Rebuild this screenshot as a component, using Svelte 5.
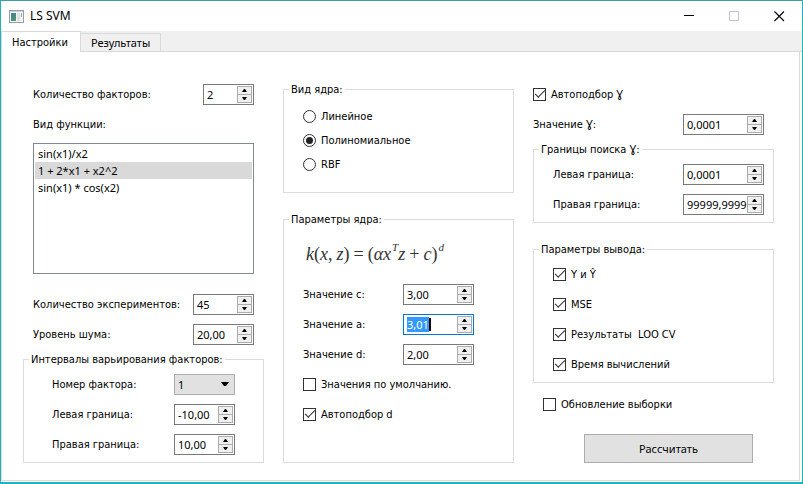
<script>
  import { onMount } from 'svelte';

  let functions = ['sin(x1)/x2', '1 + 2*x1 + x2^2', 'sin(x1) * cos(x2)'];
  let selectedFunction = $state('1 + 2*x1 + x2^2');
  let kernel = $state('poly');
  let kernels = [
    ['linear', 'Линейное'],
    ['poly', 'Полиномиальное'],
    ['rbf', 'RBF']
  ];
  let outputs = ['Y и Ŷ', 'MSE', 'Результаты\u00a0 LOO CV', 'Время вычислений'];

  onMount(() => {
    const input = document.getElementById('value-a');
    input.focus();
    input.select();
  });
</script>

{#snippet spin(id, label, value, size, active)}
  <div class="row">
    <label for={id}>{label}</label>
    <div class="spin {size}" class:active>
      <input {id} type="text" {value} />
      {#if active}<span class="caret"></span>{/if}
      <div class="steps">
        <button type="button" aria-label="Увеличить"><svg width="5" height="3" viewBox="0 0 5 3"><path d="M0 3 2 0H3L5 3Z" /></svg></button>
        <button type="button" aria-label="Уменьшить"><svg width="5" height="3" viewBox="0 0 5 3"><path d="M0 0 2 3H3L5 0Z" /></svg></button>
      </div>
    </div>
  </div>
{/snippet}

{#snippet check(label, checked)}
  <label class="choice"><input type="checkbox" {checked} /><span>{label}</span></label>
{/snippet}

<div class="window">
  <header>
    <svg class="app-icon" width="15" height="13" viewBox="0 0 15 13">
      <defs>
        <linearGradient id="pic" x1="0" y1="0" x2="0.6" y2="1">
          <stop offset="0" stop-color="#4b7ba0" />
          <stop offset="1" stop-color="#4c9a72" />
        </linearGradient>
      </defs>
      <rect x="0.5" y="0.5" width="14" height="12" fill="#f4f4f4" stroke="#9b9fa3" />
      <rect x="1" y="1" width="13" height="1" fill="#c9cfd4" />
      <rect x="2" y="3" width="5" height="8" fill="url(#pic)" />
      <rect x="8" y="3" width="3" height="8" fill="#dfe3e4" />
      <rect x="12" y="3" width="1" height="4" fill="#86b7a8" />
    </svg>
    <h1>LS SVM</h1>
    <div class="controls">
      <button type="button" aria-label="Свернуть"><svg width="11" height="11" viewBox="0 0 11 11"><path d="M0 4.5H10" stroke="#000" /></svg></button>
      <button type="button" aria-label="Развернуть" disabled><svg width="11" height="11" viewBox="0 0 11 11"><path d="M.5.5H9.5V9.5H.5Z" fill="none" stroke="#c4c4c4" /></svg></button>
      <button type="button" aria-label="Закрыть"><svg width="11" height="11" viewBox="0 0 11 11"><path d="M.5.5 10 10M10 .5.5 10" stroke="#000" stroke-width="1.1" /></svg></button>
    </div>
  </header>

  <div class="tabs" role="tablist">
    <button type="button" role="tab" aria-selected="true">Настройки</button>
    <button type="button" role="tab" aria-selected="false">Результаты</button>
  </div>

  <main>
    <section>
      <div class="inset">
        {@render spin('factors', 'Количество факторов:', '2', 'tiny')}
        <div class="row"><label for="functions">Вид функции:</label></div>
        <select id="functions" class="list" size="4" bind:value={selectedFunction}>
          {#each functions as f}<option value={f}>{f}</option>{/each}
        </select>
        {@render spin('experiments', 'Количество экспериментов:', '45', 'small')}
        {@render spin('noise', 'Уровень шума:', '20,00', 'small')}
      </div>
      <fieldset class="near wide">
        <legend>Интервалы варьирования факторов:</legend>
        <div class="row">
          <label for="factor-number">Номер фактора:</label>
          <div class="combo">
            <select id="factor-number"><option>1</option><option>2</option></select>
            <svg width="8" height="4" viewBox="0 0 8 4"><path d="M0 0H8L5 4H3Z" /></svg>
          </div>
        </div>
        {@render spin('factor-left', 'Левая граница:', '-10,00', 'small')}
        {@render spin('factor-right', 'Правая граница:', '10,00', 'small')}
      </fieldset>
    </section>

    <section>
      <fieldset class="near kernels">
        <legend>Вид ядра:</legend>
        {#each kernels as [value, label]}
          <label class="choice"><input type="radio" name="kernel" {value} bind:group={kernel} /><span>{label}</span></label>
        {/each}
      </fieldset>
      <fieldset class="far params">
        <legend>Параметры ядра:</legend>
        <div class="formula">
          <i>k</i>(<i>x</i>,<i class="z">z</i>)<span class="op">=</span>(<i>αx</i><sup>T</sup><i>z</i><span class="plus">+</span><i>c</i>)<sup>d</sup>
        </div>
        {@render spin('value-c', 'Значение c:', '3,00', 'medium')}
        {@render spin('value-a', 'Значение a:', '3,01', 'medium', true)}
        {@render spin('value-d', 'Значение d:', '2,00', 'medium')}
        {@render check('Значения по умолчанию.', false)}
        {@render check('Автоподбор d', true)}
      </fieldset>
    </section>

    <section>
      <div class="gamma">
        {@render check('Автоподбор Ɣ', true)}
        {@render spin('gamma', 'Значение Ɣ:', '0,0001', 'large')}
      </div>
      <fieldset class="near bounds">
        <legend>Границы поиска Ɣ:</legend>
        {@render spin('gamma-left', 'Левая граница:', '0,0001', 'large')}
        {@render spin('gamma-right', 'Правая граница:', '99999,9999', 'large')}
      </fieldset>
      <fieldset class="far outputs">
        <legend>Параметры вывода:</legend>
        {#each outputs as label}{@render check(label, true)}{/each}
      </fieldset>
      <div class="refresh">{@render check('Обновление выборки', false)}</div>
      <button type="button" class="run">Рассчитать</button>
    </section>
  </main>
</div>

<style>
  :global(body) {
    margin: 0;
  }
  .window,
  .window :is(button, input, select) {
    font: 11px/15px 'Noto Sans', 'DejaVu Sans', sans-serif;
    color: #000;
  }
  .window :is(label, legend),
  .tabs button[aria-selected='true'] {
    font-family: 'DejaVu Sans Condensed', 'DejaVu Sans', sans-serif;
  }
  .window {
    box-sizing: border-box;
    min-height: 100vh;
    display: flex;
    flex-direction: column;
    background: #fff;
    border: 1px solid #1fb3ba;
    border-top-color: #3f9ea3;
    border-bottom: 2px solid #1fb3ba;
  }
  .window * {
    box-sizing: border-box;
  }
  header {
    height: 30px;
    display: flex;
    align-items: center;
    padding-left: 8px;
  }
  h1 {
    flex: 1;
    margin: 0 0 0 6px;
    font-size: 12px;
    line-height: 16px;
    font-weight: 400;
  }
  .controls {
    display: flex;
  }
  .controls button {
    width: 45px;
    height: 29px;
    padding: 0;
    border: 0;
    background: none;
    display: grid;
    place-items: center;
  }
  .tabs {
    display: flex;
    align-items: flex-end;
    background: #f0f0f0;
    height: 21px;
    box-shadow: inset 0 -1px #d9d9d9;
  }
  .tabs button {
    height: 19px;
    padding: 0 10px;
    border: 1px solid #d9d9d9;
    border-left: 0;
    background: #f0f0f0;
  }
  .tabs button[aria-selected='true'] {
    height: 21px;
    min-width: 80px;
    border-left: 1px solid #d9d9d9;
    border-bottom: 0;
    background: #fff;
    text-align: left;
  }
  main {
    flex: 1;
    display: grid;
    grid-template-columns: 241fr 231fr 241fr;
    gap: 19px;
    margin: 0 2px 1px 0;
    padding: 27px 25px 17px 21px;
    border: 1px solid #dcdcdc;
    border-top: 0;
  }
  section {
    min-width: 0;
    display: flex;
    flex-direction: column;
  }
  .inset {
    padding: 0 10px;
  }
  .row {
    height: 30px;
    display: flex;
    align-items: center;
    justify-content: space-between;
    white-space: nowrap;
  }
  .list {
    display: block;
    width: 100%;
    height: 131px;
    margin: 4px 0 15px;
    padding: 1px;
    border: 1px solid #828790;
    border-radius: 0;
    background: #fff;
    outline: 0;
    overflow: hidden;
  }
  .list option {
    height: 17px;
    min-height: 17px;
    padding: 1px 3px;
    line-height: 15px;
    color: #000;
  }
  .list option:checked {
    background: #d9d9d9 linear-gradient(#d9d9d9, #d9d9d9);
  }
  fieldset {
    min-width: 0;
    margin: 0;
    padding: 2px 9px 3px;
    border: 1px solid #dcdcdc;
  }
  legend {
    margin-left: -3px;
    padding: 0 2px;
    height: 15px;
  }
  .near {
    margin-top: 3px;
  }
  .far {
    margin-top: 19px;
  }
  .wide {
    padding-left: 28px;
    padding-right: 28px;
  }
  .wide legend {
    margin-left: -23px;
  }
  .kernels {
    padding: 7px 19px 16px;
  }
  .kernels .choice {
    height: 24px;
  }
  .params {
    padding: 2px 39px 33px 19px;
  }
  .kernels legend,
  .params legend {
    margin-left: -14px;
  }
  .gamma {
    padding-right: 10px;
  }
  .bounds {
    padding-left: 19px;
  }
  .outputs {
    padding-left: 19px;
  }
  .bounds legend,
  .outputs legend {
    margin-left: -14px;
  }
  .spin {
    position: relative;
    display: flex;
    height: 21px;
    border: 1px solid #7a7a7a;
    background: #fff;
    padding: 1px;
  }
  .tiny {
    width: 51px;
  }
  .small {
    width: 61px;
  }
  .medium {
    width: 71px;
  }
  .large {
    width: 81px;
  }
  .spin.active {
    border-color: #0078d7;
  }
  .spin input {
    flex: 1;
    width: 0;
    min-width: 0;
    padding: 0 0 0 2px;
    border: 0;
    outline: 0;
    background: none;
  }
  .spin input::selection {
    background: #3399ff;
    color: #fff;
  }
  .caret {
    position: absolute;
    left: 25px;
    top: 3px;
    width: 2px;
    height: 13px;
    background: #000;
  }
  .steps {
    width: 15px;
    display: flex;
    flex-direction: column;
  }
  .steps button {
    flex: 1;
    min-height: 0;
    padding: 0;
    border: 1px solid #acacac;
    background: #f0f0f0;
    display: grid;
    place-items: center;
  }
  .steps button + button {
    margin-top: -1px;
  }
  .combo {
    position: relative;
    width: 61px;
  }
  .combo select {
    appearance: none;
    display: block;
    width: 100%;
    height: 21px;
    padding: 0 3px;
    border: 1px solid #acacac;
    border-radius: 0;
    background: #e1e1e1;
  }
  .combo svg {
    position: absolute;
    right: 6px;
    top: 8px;
    pointer-events: none;
  }
  .choice {
    height: 30px;
    display: flex;
    align-items: center;
    gap: 5px;
    white-space: nowrap;
  }
  .choice input {
    appearance: none;
    width: 13px;
    height: 13px;
    margin: 0;
    border: 1px solid #333;
    background: #fff;
    display: grid;
    place-items: center;
  }
  .choice input[type='radio'] {
    border-radius: 50%;
  }
  .choice input[type='radio']:checked::before {
    content: '';
    width: 7px;
    height: 7px;
    border-radius: 50%;
    background: #222;
  }
  .choice input[type='checkbox']:checked::before {
    content: '';
    width: 9px;
    height: 4px;
    margin-top: -3px;
    border: solid #333;
    border-width: 0 0 1px 1px;
    transform: rotate(-45deg);
  }
  .formula {
    height: 50px;
    padding-left: 3px;
    font: 18px/50px 'Liberation Serif', 'Times New Roman', serif;
    color: #333;
    white-space: nowrap;
  }
  .formula sup {
    margin-left: 1px;
    font-size: 11px;
    line-height: 0;
    font-style: italic;
    vertical-align: 9px;
  }
  .z {
    margin-left: 4px;
  }
  .op {
    margin: 0 4px;
  }
  .plus {
    margin: 0 4px;
  }
  .refresh {
    margin-top: 6px;
    padding-left: 10px;
  }
  .run {
    height: 29px;
    margin: 15px 21px 0 51px;
    border: 1px solid #adadad;
    background: #e1e1e1;
  }
</style>
